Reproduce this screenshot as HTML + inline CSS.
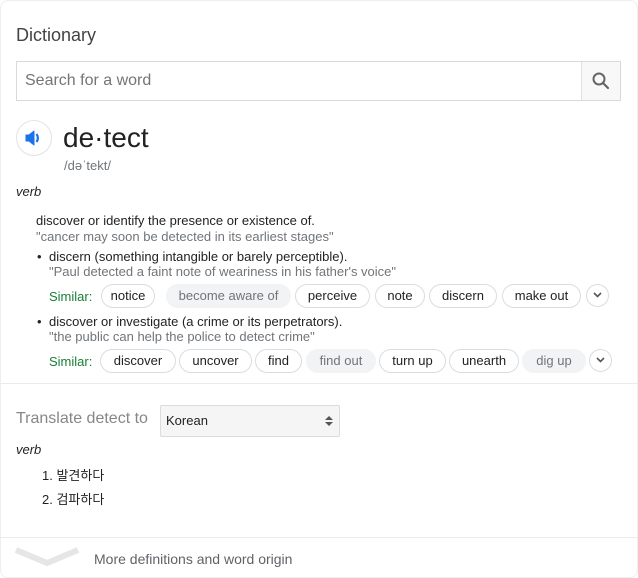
<!DOCTYPE html>
<html><head><meta charset="utf-8"><style>
*{margin:0;padding:0;box-sizing:border-box}
body{width:638px;height:578px;background:#fff;font-family:"Liberation Sans","Noto Sans CJK KR",sans-serif;position:relative;overflow:hidden;color:#222}
.a{position:absolute;white-space:nowrap}
.chip{position:absolute;height:24px;border:1px solid #dadce0;border-radius:12px;font-size:13px;color:#222;text-align:center;line-height:22px;background:#fff}
.chip.g{background:#f1f3f4;border-color:#f1f3f4;color:#70757a}
.chev{position:absolute;width:23px;height:23px;border:1px solid #dadce0;border-radius:50%}
.sim{position:absolute;font-size:13px;color:#188038}
</style></head><body>
<div class="a" style="left:0;top:0;width:638px;height:578px;border:1px solid #eceff1;border-radius:8px"></div>
<div class="a" style="left:16px;top:25px;font-size:18px;color:#444">Dictionary</div>
<div class="a" style="left:16px;top:61px;width:605px;height:40px;border:1px solid #d9d9d9"></div>
<div class="a" style="left:581px;top:62px;width:39px;height:38px;background:#f8f8f8;border-left:1px solid #e0e0e0"></div>
<svg class="a" style="left:591px;top:71px" width="20" height="20" viewBox="0 0 20 20"><circle cx="8" cy="8" r="5.5" fill="none" stroke="#666" stroke-width="2"/><path d="M12 12 L17 17" stroke="#666" stroke-width="2.2" stroke-linecap="round"/></svg>
<div class="a" style="left:25px;top:72px;font-size:16px;color:#757575">Search for a word</div>
<div class="a" style="left:16px;top:120px;width:36px;height:36px;border:1px solid #e3e3e3;border-radius:50%"></div>
<svg class="a" style="left:24px;top:129px" width="19" height="18" viewBox="0 0 19 18"><path d="M2 6h3l5-4v14l-5-4H2z" fill="#1a73e8" stroke="#1a73e8" stroke-width="1" stroke-linejoin="round"/><path d="M12.5 5q2.8 4 0 8" fill="none" stroke="#1a73e8" stroke-width="2.2"/></svg>
<div class="a" style="left:63px;top:122px;font-size:28px;color:#222">de·tect</div>
<div class="a" style="left:64px;top:158px;font-size:13px;color:#70757a">/dəˈtekt/</div>
<div class="a" style="left:16px;top:184px;font-size:13px;font-style:italic;color:#222">verb</div>
<div class="a" style="left:36px;top:213px;font-size:13px">discover or identify the presence or existence of.</div>
<div class="a" style="left:36px;top:229px;font-size:13px;color:#70757a">"cancer may soon be detected in its earliest stages"</div>
<div class="a" style="left:37px;top:249px;font-size:13px">•</div>
<div class="a" style="left:49px;top:249px;font-size:13px">discern (something intangible or barely perceptible).</div>
<div class="a" style="left:49px;top:264px;font-size:13px;color:#70757a">"Paul detected a faint note of weariness in his father's voice"</div>
<div class="sim" style="left:49px;top:289px">Similar:</div>
<div class="chip" style="left:101px;top:284px;width:54px">notice</div>
<div class="chip g" style="left:166px;top:284px;width:125px">become aware of</div>
<div class="chip" style="left:295px;top:284px;width:75px">perceive</div>
<div class="chip" style="left:375px;top:284px;width:50px">note</div>
<div class="chip" style="left:429px;top:284px;width:68px">discern</div>
<div class="chip" style="left:502px;top:284px;width:79px">make out</div>
<div class="chev" style="left:586px;top:284px"></div>
<svg class="a" style="left:592px;top:291px" width="11" height="8"><path d="M2 2l3.5 3.5L9 2" fill="none" stroke="#555" stroke-width="1.6"/></svg>
<div class="a" style="left:37px;top:314px;font-size:13px">•</div>
<div class="a" style="left:49px;top:314px;font-size:13px">discover or investigate (a crime or its perpetrators).</div>
<div class="a" style="left:49px;top:329px;font-size:13px;color:#70757a">"the public can help the police to detect crime"</div>
<div class="sim" style="left:49px;top:354px">Similar:</div>
<div class="chip" style="left:100px;top:349px;width:76px">discover</div>
<div class="chip" style="left:179px;top:349px;width:73px">uncover</div>
<div class="chip" style="left:255px;top:349px;width:47px">find</div>
<div class="chip g" style="left:306px;top:349px;width:70px">find out</div>
<div class="chip" style="left:379px;top:349px;width:67px">turn up</div>
<div class="chip" style="left:449px;top:349px;width:70px">unearth</div>
<div class="chip g" style="left:522px;top:349px;width:64px">dig up</div>
<div class="chev" style="left:589px;top:349px"></div>
<svg class="a" style="left:595px;top:356px" width="11" height="8"><path d="M2 2l3.5 3.5L9 2" fill="none" stroke="#555" stroke-width="1.6"/></svg>
<div class="a" style="left:0;top:383px;width:638px;height:1px;background:#ebebeb"></div>
<div class="a" style="left:16px;top:410px;font-size:16px;color:#878787">Translate detect to</div>
<div class="a" style="left:160px;top:405px;width:180px;height:32px;background:#f5f5f5;border:1px solid #dcdcdc;border-radius:2px"></div>
<div class="a" style="left:166px;top:413px;font-size:13px;color:#222">Korean</div>
<svg class="a" style="left:325px;top:415px" width="8" height="12"><path d="M0 5l4-4 4 4zM0 7l4 4 4-4z" fill="#555"/></svg>
<div class="a" style="left:16px;top:442px;font-size:13px;font-style:italic">verb</div>
<div class="a" style="left:42px;top:465px;font-size:13px">1. 발견하다</div>
<div class="a" style="left:42px;top:489px;font-size:13px">2. 검파하다</div>
<div class="a" style="left:0;top:537px;width:638px;height:1px;background:#ebebeb"></div>
<svg class="a" style="left:14px;top:545px" width="66" height="24"><path d="M2 5 L33 18 L64 5" fill="none" stroke="#e6e6e6" stroke-width="6"/></svg>
<div class="a" style="left:94px;top:551px;font-size:14px;color:#5f6368">More definitions and word origin</div>
</body></html>
